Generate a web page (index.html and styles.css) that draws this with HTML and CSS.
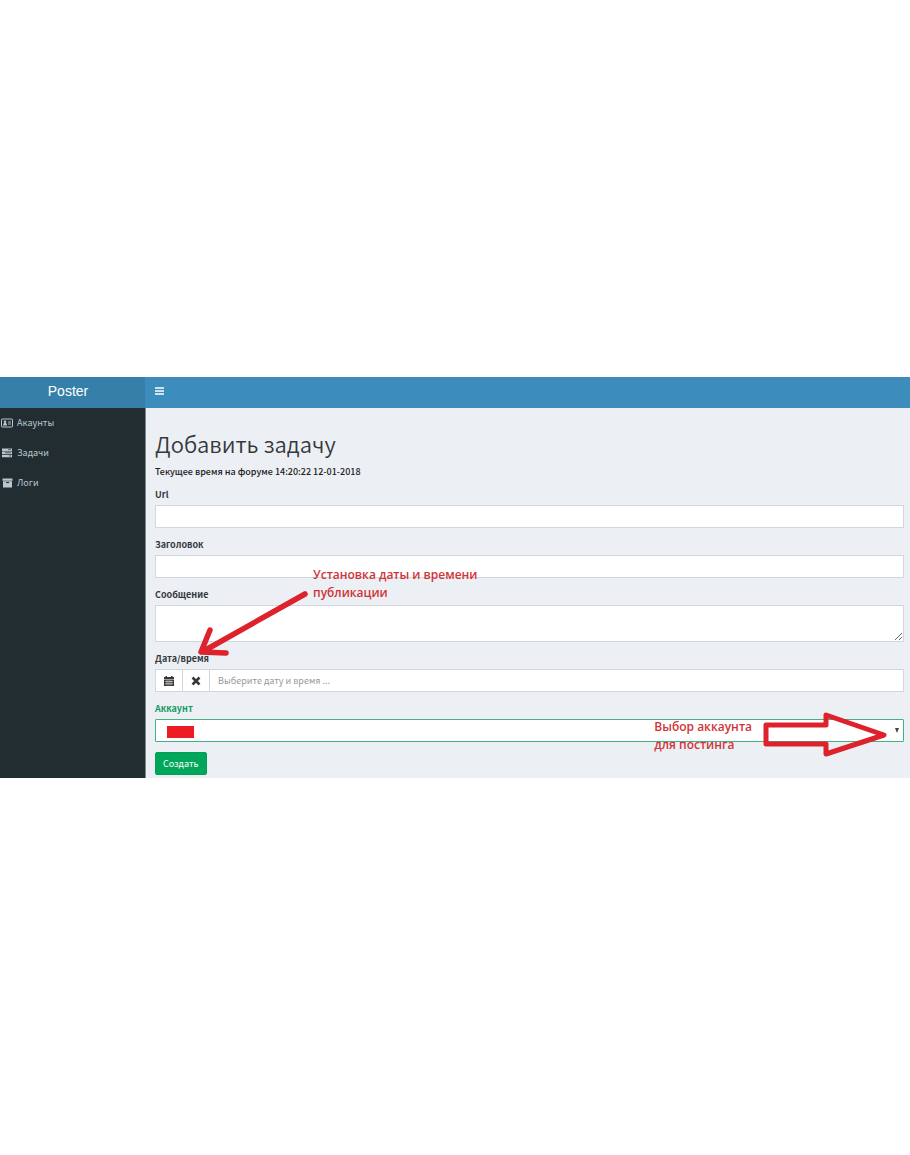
FILE: index.html
```html
<!DOCTYPE html>
<html lang="ru">
<head>
<meta charset="utf-8">
<title>Poster</title>
<link rel="stylesheet" href="styles.css">
</head>
<body>
<div class="app">
  <header class="topbar">
    <a class="logo" href="#">Poster</a>
    <button class="toggle" type="button" aria-label="Меню">
      <svg width="9" height="8" viewBox="0 0 9 8"><path d="M0 1h9M0 4h9M0 7h9" stroke="currentColor" stroke-width="1.5"/></svg>
    </button>
  </header>
  <div class="body">
    <nav class="sidebar">
      <a href="#"><svg width="12" height="10" viewBox="0 0 12 10"><rect x=".5" y="1" width="11" height="8" rx=".6" fill="none" stroke="currentColor"/><circle cx="4" cy="3.8" r="1.3" fill="currentColor"/><path d="M2 7.5c0-2 .8-2.5 2-2.5s2 .5 2 2.500z" fill="currentColor"/><path d="M7 4h3M7 6h3" stroke="currentColor" stroke-width=".9"/></svg>Акаунты</a>
      <a href="#"><svg width="12" height="10" viewBox="0 0 12 10"><path d="M1 .5h10v2.500H1zM1 3.600h10v2.500H1zM1 6.700h10v2.500H1z" fill="currentColor"/><path d="M7 1.700h3M4 4.800h6M8 7.900h2" stroke="#222d32" stroke-width=".7"/></svg>Задачи</a>
      <a href="#"><svg width="12" height="10" viewBox="0 0 12 10"><path d="M1.500 .5h10v2.300h-10zM2 3.200h9V9.500H2z" fill="currentColor"/><path d="M5 4.600h3" stroke="#222d32"/></svg>Логи</a>
    </nav>
    <main class="content">
      <h1>Добавить задачу</h1>
      <p class="now">Текущее время на форуме 14:20:22 12-01-2018</p>
      <form>
        <div class="group">
          <label for="url">Url</label>
          <input class="control" id="url" type="text">
        </div>
        <div class="group">
          <label for="title">Заголовок</label>
          <input class="control" id="title" type="text">
        </div>
        <div class="group">
          <label for="message">Сообщение</label>
          <textarea class="control message" id="message"></textarea>
        </div>
        <div class="group">
          <label for="date">Дата/время</label>
          <div class="datetime">
            <button class="addon" type="button" aria-label="Выбрать дату"><svg width="10" height="10" viewBox="0 0 10 10"><path d="M0 1h1.500V0h1.500v1h4V0h1.500v1H10v2H0zM0 3.600h10V10H0z" fill="currentColor"/><path d="M1 5.600h8M1 7.800h8" stroke="#fff" stroke-width=".6"/><path d="M3 4v5.500M5 4v5.500M7 4v5.500" stroke="#fff" stroke-width=".4"/></svg></button>
            <button class="addon" type="button" aria-label="Очистить"><svg width="10" height="10" viewBox="0 0 10 10"><path d="M1.500 1.500l7 7M8.500 1.500l-7 7" stroke="currentColor" stroke-width="2.600"/></svg></button>
            <input class="control" id="date" type="text" placeholder="Выберите дату и время ...">
          </div>
        </div>
        <div class="group success">
          <label for="account">Аккаунт</label>
          <div class="select">
            <select class="control" id="account"><option></option></select>
            <span class="mask"></span>
            <svg class="caret" width="4" height="5" viewBox="0 0 4 5"><path d="M0 0h4L2 5z" fill="#444"/></svg>
          </div>
        </div>
        <button class="submit" type="submit">Создать</button>
      </form>
      <p class="note note-date">Установка даты и времени<br>публикации</p>
      <svg class="arrow arrow-date" width="112" height="68" viewBox="0 0 112 68"><path d="M108 5L5 63M13 41L4 63L29 64" fill="none" stroke="#dd222b" stroke-width="5.500" stroke-linecap="round" stroke-linejoin="round"/></svg>
      <p class="note note-account">Выбор аккаунта<br>для постинга</p>
      <svg class="arrow arrow-account" width="126" height="46" viewBox="0 0 126 46"><path d="M4 13H64V3L122 23L64 42V32H4Z" fill="none" stroke="#dd222b" stroke-width="5" stroke-linejoin="round"/></svg>
    </main>
  </div>
</div>
</body>
</html>
```
FILE: styles.css
```css
* {
  box-sizing: border-box;
}

body {
  margin: 0;
  min-height: 100vh;
  display: flex;
  flex-direction: column;
  justify-content: center;
  background: #fff;
  color: #36393c;
  font-family: "Noto Sans CJK SC", "Noto Sans", sans-serif;
  font-size: 9px;
  line-height: 14px;
}

button,
input,
select,
textarea {
  font: inherit;
  color: inherit;
}

.topbar {
  display: flex;
  height: 31px;
  background: #3c8dbc;
  color: #fff;
}

.logo {
  width: 145px;
  padding-right: 9px;
  background: #367fa9;
  color: #fff;
  font-family: "Liberation Sans", Arial, sans-serif;
  font-size: 14px;
  line-height: 29px;
  text-align: center;
  text-decoration: none;
}

.toggle {
  display: flex;
  align-items: center;
  padding: 0 10px 3px;
  border: 0;
  background: none;
}

.body {
  display: flex;
}

.sidebar {
  width: 146px;
  flex: none;
  border-right: 1px solid #7d898f;
  background: #222d32;
}

.sidebar a {
  display: flex;
  align-items: center;
  gap: 4px;
  height: 30px;
  padding-left: 1px;
  color: #b8c7ce;
  text-decoration: none;
}

.content {
  position: relative;
  flex: 1;
  padding: 20px 6px 3px 9px;
  background: #ecf0f5;
}

h1 {
  margin: 0 0 7px;
  font-size: 22px;
  font-weight: 350;
  line-height: 30px;
}

.now {
  margin: 0 0 9px;
  color: #222;
  font-weight: 500;
}

.group {
  margin-bottom: 10px;
}

.group label {
  display: block;
  margin-bottom: 3px;
  font-weight: 700;
}

.control {
  display: block;
  width: 100%;
  height: 23px;
  padding: 0 8px;
  border: 1px solid #d2d6de;
  border-radius: 0;
  background: #fff;
}

.control::placeholder {
  color: #999;
}

.message {
  height: 37px;
  resize: vertical;
}

.datetime {
  display: flex;
}

.addon {
  display: flex;
  flex: none;
  align-items: center;
  justify-content: center;
  width: 27px;
  padding: 0;
  border: 1px solid #d2d6de;
  border-right: 0;
  background: #fff;
}

.group.success label {
  color: #159a62;
}

.select {
  position: relative;
  border: 1px solid #45b083;
  border-radius: 1px;
}

.select .control {
  appearance: none;
  height: 21px;
  border: 0;
}

.mask {
  position: absolute;
  left: 11px;
  top: 6px;
  width: 27px;
  height: 12px;
  background: #ed1c24;
}

.caret {
  position: absolute;
  right: 4px;
  top: 8px;
}

.submit {
  display: block;
  height: 23px;
  padding: 0 7px;
  border: 1px solid #00a05a;
  border-radius: 2px;
  background: #00a65a;
  color: #fff;
}

.note {
  position: absolute;
  margin: 0;
  color: #d13438;
  font-family: "Open Sans", "Noto Sans", sans-serif;
  font-size: 12px;
  font-weight: 600;
  line-height: 18px;
}

.note-date {
  left: 167px;
  top: 158px;
}

.note-account {
  right: 158px;
  top: 310px;
}

.arrow {
  position: absolute;
  pointer-events: none;
}

.arrow-date {
  left: 51px;
  top: 181px;
}

.arrow-account {
  right: 22px;
  top: 304px;
}
```
